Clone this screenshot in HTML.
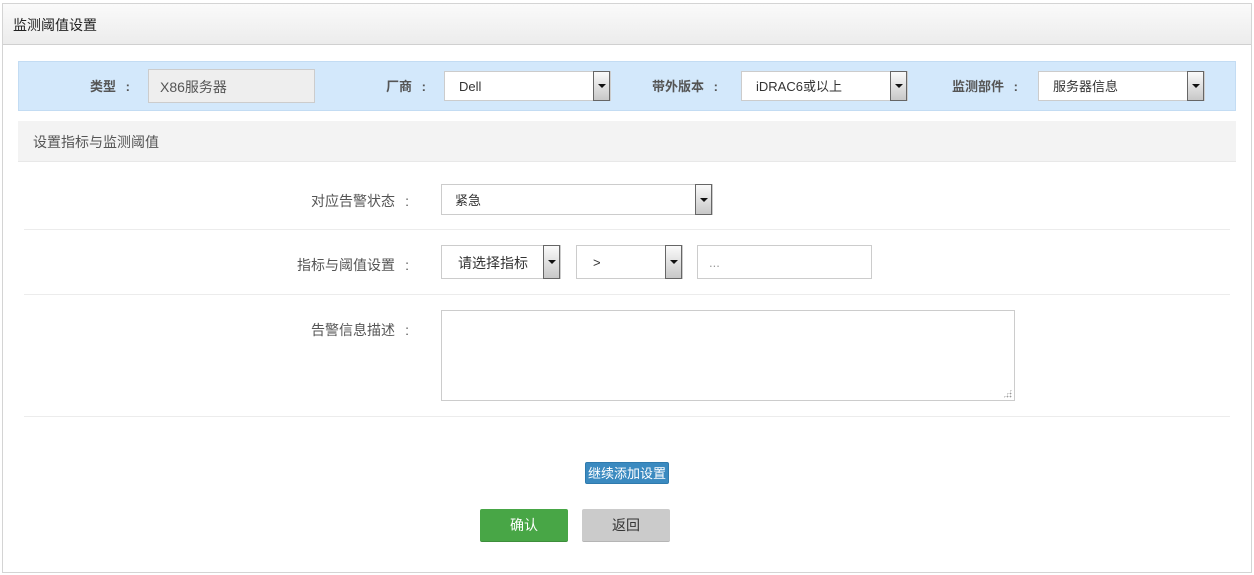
<!DOCTYPE html>
<html><head><meta charset="utf-8"><style>
*{box-sizing:border-box;margin:0;padding:0}
body{width:1254px;height:575px;background:#fff;font-family:"Liberation Sans","Noto Sans CJK SC",sans-serif;font-size:13px;color:#555;position:relative;overflow:hidden}
.a{position:absolute}
.frame{left:2px;top:3px;width:1250px;height:570px;border:1px solid #d4d4d4}
.hdr{left:3px;top:4px;width:1248px;height:41px;background:linear-gradient(#fafafa,#ececec);border-bottom:1px solid #d0d0d0;color:#222;font-size:14px;line-height:42px;padding-left:10px}
.band{left:18px;top:61px;width:1218px;height:50px;background:#d3e8fb;border:1px solid #c3dcf3}
.lbl{font-weight:bold;color:#555;font-size:13px;line-height:20px}
.c{display:inline-block;width:14px;text-align:right}
.sel{background:#fff;border:1px solid #ccc;font-size:13px;color:#333;padding-left:14px}
.btn{position:absolute;right:0;top:-1px;bottom:-1px;width:17px;border:1px solid #666;background:linear-gradient(#fafafa,#c8c8c8)}
.btn:after{content:"";position:absolute;left:4px;top:50%;margin-top:-2px;border-left:4px solid transparent;border-right:4px solid transparent;border-top:4px solid #111}
.sec{left:18px;top:121px;width:1218px;height:41px;background:#f3f3f3;border-bottom:1px solid #e8e8e8;line-height:42px;padding-left:15px;font-size:14px}
.hr{left:24px;width:1206px;height:1px;background:#ececec}
.rl{font-size:14px;color:#555;text-align:right;width:200px;left:209px}
</style></head><body>
<div class="a frame"></div>
<div class="a hdr">监测阈值设置</div>
<div class="a band"></div>
<div class="a lbl" style="left:90px;top:77px">类型<span class="c">:</span></div>
<div class="a" style="left:148px;top:69px;width:167px;height:34px;background:#eee;border:1px solid #ccc;line-height:34px;padding-left:11px;font-size:14px;color:#555">X86服务器</div>
<div class="a lbl" style="left:386px;top:77px">厂商<span class="c">:</span></div>
<div class="a sel" style="left:444px;top:71px;width:167px;height:30px;line-height:30px">Dell<span class="btn"></span></div>
<div class="a lbl" style="left:652px;top:77px">带外版本<span class="c">:</span></div>
<div class="a sel" style="left:741px;top:71px;width:167px;height:30px;line-height:30px">iDRAC6或以上<span class="btn"></span></div>
<div class="a lbl" style="left:952px;top:77px">监测部件<span class="c">:</span></div>
<div class="a sel" style="left:1038px;top:71px;width:167px;height:30px;line-height:30px">服务器信息<span class="btn"></span></div>
<div class="a sec">设置指标与监测阈值</div>
<div class="a rl" style="top:191px">对应告警状态<span class="c">:</span></div>
<div class="a sel" style="left:441px;top:184px;width:272px;height:31px;line-height:31px;padding-left:13px">紧急<span class="btn"></span></div>
<div class="a hr" style="top:229px"></div>
<div class="a rl" style="top:255px">指标与阈值设置<span class="c">:</span></div>
<div class="a sel" style="left:441px;top:245px;width:120px;height:34px;line-height:34px;padding-left:16px;font-size:14px">请选择指标<span class="btn"></span></div>
<div class="a sel" style="left:576px;top:245px;width:107px;height:34px;line-height:34px;padding-left:16px">&gt;<span class="btn"></span></div>
<div class="a sel" style="left:697px;top:245px;width:175px;height:34px;line-height:34px;padding-left:11px;color:#999">...</div>
<div class="a hr" style="top:294px"></div>
<div class="a rl" style="top:320px">告警信息描述<span class="c">:</span></div>
<div class="a" style="left:441px;top:310px;width:574px;height:91px;border:1px solid #ccc"></div>
<div class="a" style="left:1003px;top:389px;width:9px;height:9px;background:radial-gradient(circle,#999 0.7px,transparent 1px) 0 0/3px 3px;clip-path:polygon(100% 0,100% 100%,0 100%)"></div>
<div class="a hr" style="top:416px"></div>
<div class="a" style="left:585px;top:462px;width:84px;height:22px;background:#3b8ac0;border:1px solid #2f7aad;border-radius:2px;color:#fff;font-size:13px;line-height:21px;text-align:center">继续添加设置</div>
<div class="a" style="left:480px;top:509px;width:88px;height:33px;background:#48a646;border-bottom:1px solid #3d8e3b;border-radius:2px;color:#fff;font-size:14px;line-height:33px;text-align:center">确认</div>
<div class="a" style="left:582px;top:509px;width:88px;height:33px;background:#cbcbcb;border-bottom:1px solid #b5b5b5;border-radius:2px;color:#333;font-size:14px;line-height:33px;text-align:center">返回</div>
</body></html>
